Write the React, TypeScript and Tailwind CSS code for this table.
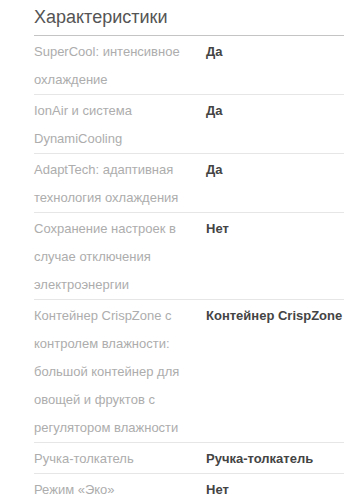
const specs: [string, string][] = [
  ["SuperCool: интенсивное охлаждение", "Да"],
  ["IonAir и система DynamiCooling", "Да"],
  ["AdaptTech: адаптивная технология охлаждения", "Да"],
  ["Сохранение настроек в случае отключения электроэнергии", "Нет"],
  [
    "Контейнер CrispZone с контролем влажности: большой контейнер для овощей и фруктов с регулятором влажности",
    "Контейнер CrispZone",
  ],
  ["Ручка-толкатель", "Ручка-толкатель"],
  ["Режим «Эко»", "Нет"],
];

export default function App() {
  return (
    <div className="bg-white pl-[34px] font-['Liberation_Sans',Arial,sans-serif]">
      <h2 className="pt-[6px] pb-[6px] text-[18px] leading-[23px] text-[#555] border-b border-[#c4c4c4]">
        Характеристики
      </h2>
      <div>
        {specs.map(([label, value]) => (
          <div
            key={label}
            className="grid grid-cols-[172px_1fr] pt-[2px] pb-0 text-[13px] leading-[28px] border-b border-[#e6e6e6]"
          >
            <div className="pr-4 text-[#adadad]">{label}</div>
            <div className="font-bold text-[#444] whitespace-nowrap">{value}</div>
          </div>
        ))}
      </div>
    </div>
  );
}
